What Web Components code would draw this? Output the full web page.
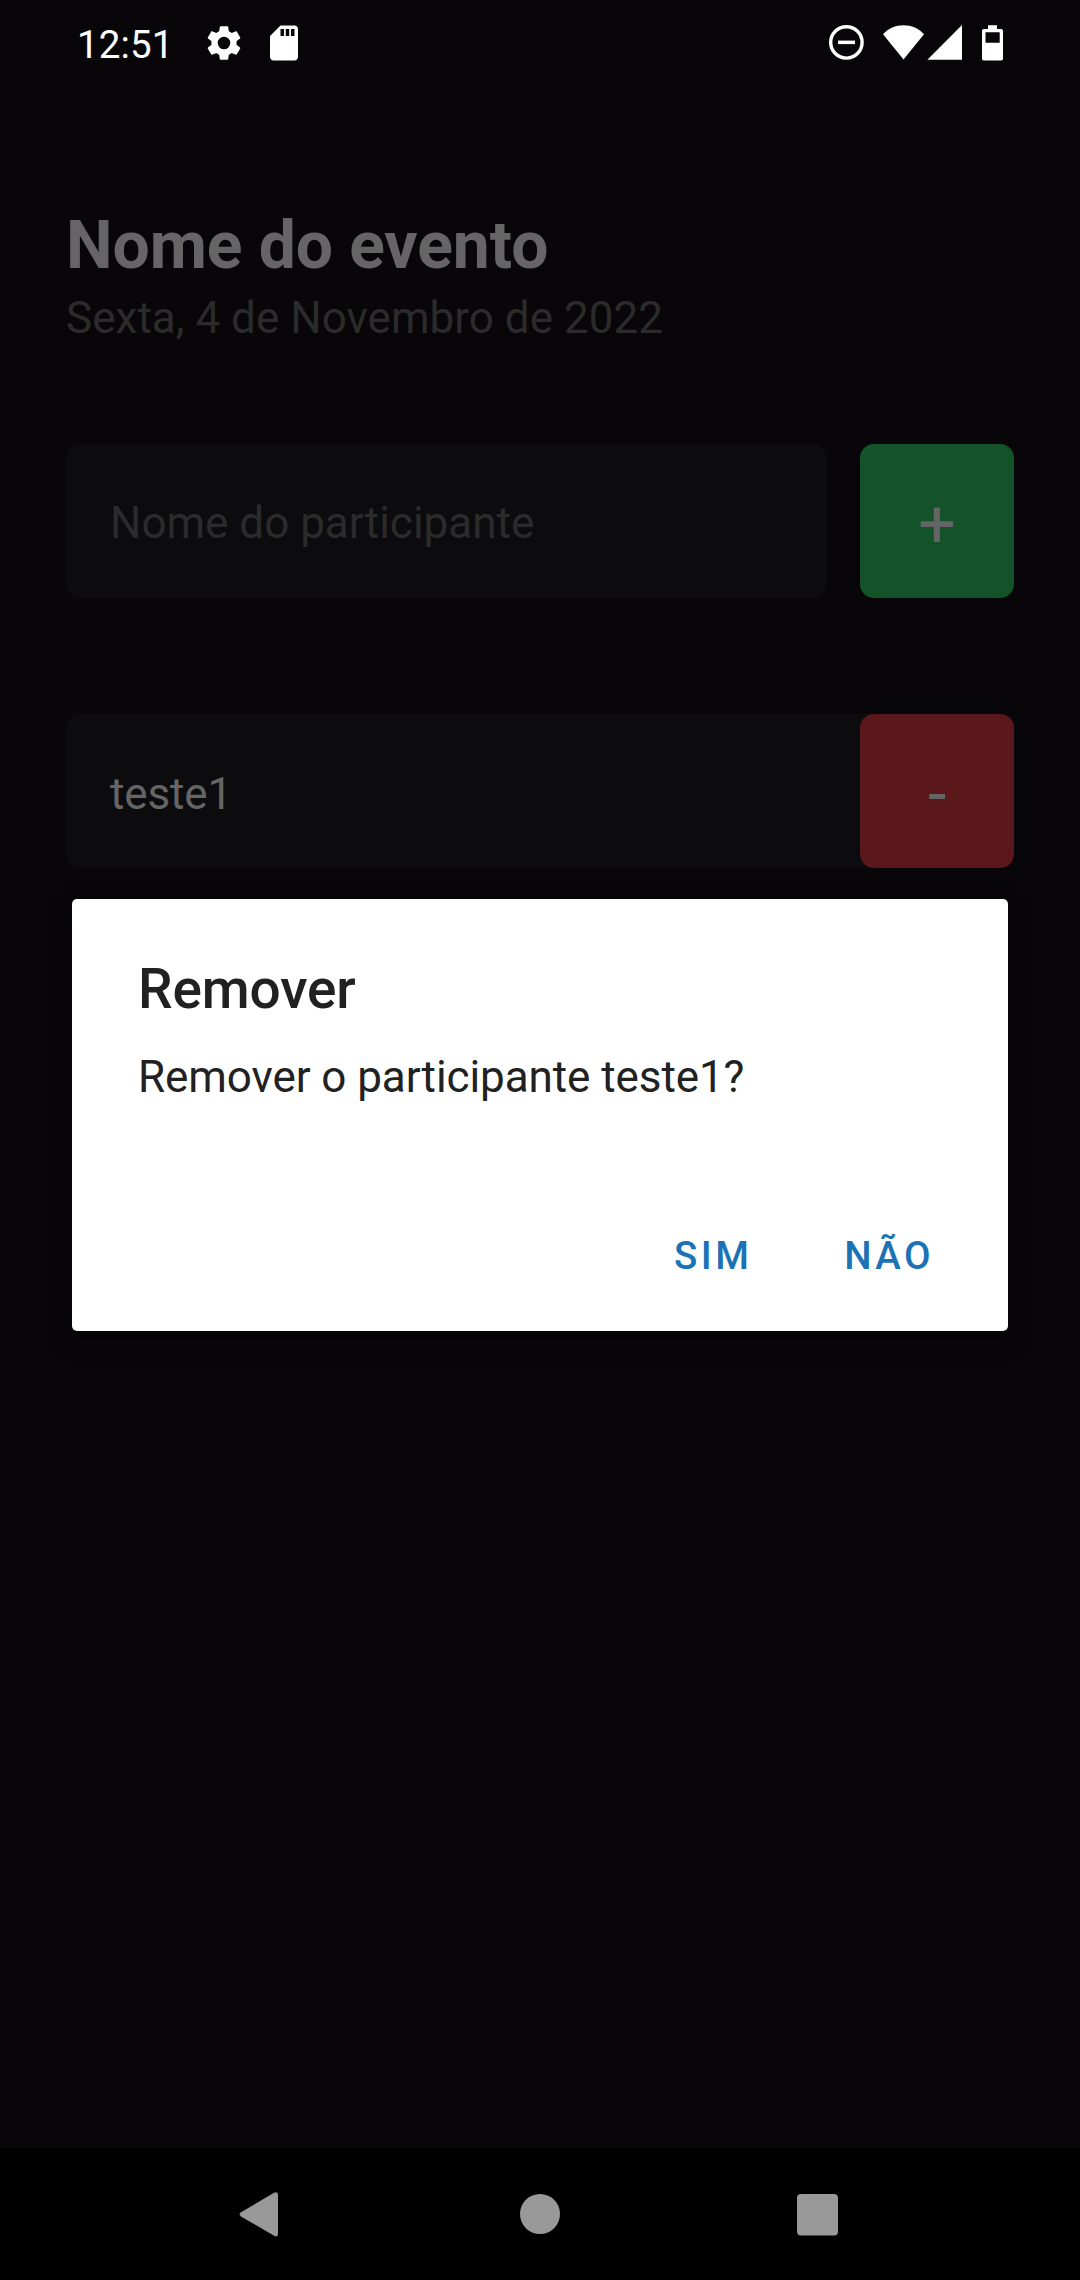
<!DOCTYPE html>
<html lang="pt-BR">
<head>
<meta charset="utf-8">
<title>Nome do evento</title>
<style>
html,body{margin:0;padding:0;background:#080609}
body{width:1080px;height:2280px;overflow:hidden;font-family:Roboto,"Noto Sans",sans-serif}
</style>
</head>
<body>
<event-app>
  <event-header slot="header" title-text="Nome do evento">Sexta, 4 de Novembro de 2022</event-header>
  <participant-form slot="form">Nome do participante</participant-form>
  <participant-row slot="list">teste1</participant-row>
  <confirm-dialog slot="dialog" heading="Remover">Remover o participante teste1?
    <dialog-action slot="actions">SIM</dialog-action>
    <dialog-action slot="actions">NÃO</dialog-action>
  </confirm-dialog>
</event-app>
<script>
const define = (name, html) => customElements.define(name, class extends HTMLElement {
  constructor() {
    super();
    const t = document.createElement('template');
    t.innerHTML = html;
    this.attachShadow({mode: 'open'}).appendChild(t.content.cloneNode(true));
  }
  connectedCallback() {
    this.shadowRoot.querySelectorAll('[data-attr]').forEach(e => {
      e.textContent = this.getAttribute(e.dataset.attr) || '';
    });
  }
});

define('status-bar', `
<style>
:host{display:flex;justify-content:space-between;align-items:flex-start;box-sizing:border-box;height:84px;padding:22px 73px 0 77px;color:#fff}
.side{display:flex;align-items:center;height:42px}
.time{font-size:38.5px;line-height:46px;padding-top:3px;width:125.500px;letter-spacing:.15px}
svg{display:block;fill:currentColor;flex:none}
</style>
<div class="side">
  <span class="time">12:51</span>
  <svg width="42" height="42" viewBox="0 0 24 24"><path d="M19.14 12.94c.04-.3.06-.61.06-.94 0-.32-.02-.64-.07-.94l2.03-1.58a.49.49 0 0 0 .12-.61l-1.92-3.32a.488.488 0 0 0-.59-.22l-2.39.96c-.5-.38-1.03-.7-1.62-.94l-.36-2.54a.484.484 0 0 0-.48-.41h-3.84c-.24 0-.43.17-.47.41l-.36 2.54c-.59.24-1.13.57-1.62.94l-2.39-.96c-.22-.08-.47 0-.59.22L2.74 8.87c-.12.21-.08.47.12.61l2.03 1.58c-.05.3-.09.63-.09.94s.02.64.07.94l-2.03 1.58a.49.49 0 0 0-.12.61l1.92 3.32c.12.22.37.29.59.22l2.39-.96c.5.38 1.03.7 1.62.94l.36 2.54c.05.24.24.41.48.41h3.84c.24 0 .44-.17.47-.41l.36-2.54c.59-.24 1.13-.56 1.62-.94l2.39.96c.22.08.47 0 .59-.22l1.92-3.32c.12-.22.07-.47-.12-.61l-2.01-1.58zM12 15.6A3.6 3.6 0 1 1 12 8.4a3.6 3.6 0 0 1 0 7.2z"/></svg>
  <svg style="margin-left:18.5px" width="42" height="42" viewBox="0 0 24 24"><path d="M18 2h-8L4.02 8 4 20c0 1.1.9 2 2 2h12c1.1 0 2-.9 2-2V4c0-1.100-.9-2-2-2zm-6 6h-2V4h2v4zm3 0h-2V4h2v4zm3 0h-2V4h2v4z"/></svg>
</div>
<div class="side">
  <svg width="182" height="42" viewBox="825 22 182 42">
    <circle cx="846.4" cy="42.4" r="15.7" fill="none" stroke="#fff" stroke-width="3.4"/>
    <path d="M838 40.600h17v3.500h-17z"/>
    <path d="M903.500 59.500 883 34.200C888.500 28.500 895.500 25.300 903.500 25.300S918.500 28.500 924 34.200Z"/>
    <path d="M962 25v34.700h-34.600z"/>
    <path fill-rule="evenodd" d="M988 25.300h9v3.700h4.200q1.800 0 1.800 1.800v27.900q0 1.800-1.800 1.800h-17.400q-1.800 0-1.800-1.800v-27.900q0-1.800 1.800-1.800h4.200zM985.500 32.300v10.400h14.200v-10.400z"/>
  </svg>
</div>`);

define('nav-bar', `
<style>
:host{display:flex;justify-content:space-between;align-items:center;box-sizing:border-box;height:132px;padding:0 240px 0 238px;background:#000}
svg{display:block;fill:#999}
</style>
<svg width="44" height="50" viewBox="0 0 44 50"><path d="M36.600 3.500 3 23.200q-2.600 2 0 4.200l33.600 19.700q3.400 1.200 3.400-2.400V5.900q0-3.600-3.400-2.400z"/></svg>
<svg width="44" height="50" viewBox="0 0 44 50"><circle cx="23" cy="25" r="20"/></svg>
<svg width="44" height="50" viewBox="0 0 44 50"><rect x="1" y="5" width="41" height="41.500" rx="4"/></svg>`);

define('event-header', `
<style>
:host{display:flex;flex-direction:column;gap:7px;color:#656566}
h1{margin:0;font-size:66px;line-height:79px;font-weight:700;letter-spacing:-.08px}
p{margin:0;font-size:44px;line-height:52px;color:#2b2b2b;letter-spacing:.03px}
</style>
<h1 data-attr="title-text"></h1><p><slot></slot></p>`);

define('square-button', `
<style>
:host{display:flex;align-items:center;justify-content:center;flex:none;box-sizing:border-box;width:154px;height:154px;padding-top:8px;border-radius:14px;background:var(--fill);color:#656566;font-size:66px;line-height:78px}
</style>
<slot></slot>`);

define('participant-form', `
<style>
:host{display:flex;gap:33px}
.field{flex:1;display:flex;align-items:center;box-sizing:border-box;height:154px;padding:3px 44px 0;border-radius:14px;background:#0c0c0e;color:#2b2b2b;font-size:44px;line-height:52px}
square-button{--fill:#145329}
</style>
<div class="field"><slot></slot></div><square-button>+</square-button>`);

define('participant-row', `
<style>
:host{display:flex;border-radius:14px;background:#0c0c0e}
.name{flex:1;display:flex;align-items:center;box-sizing:border-box;height:154px;padding:5px 44px 0;color:#656566;font-size:44px;line-height:52px;letter-spacing:-.15px}
square-button{--fill:#5a181b}
</style>
<div class="name"><slot></slot></div><square-button>-</square-button>`);

define('dialog-action', `
<style>
:host{display:block;font-size:38.5px;line-height:46px;font-weight:500;letter-spacing:3.44px;color:#1b72b5}
</style>
<slot></slot>`);

define('confirm-dialog', `
<style>
:host{position:absolute;inset:0;display:flex;align-items:flex-start;justify-content:center;padding-top:899px}
.card{display:flex;flex-direction:column;box-sizing:border-box;width:936px;height:432px;padding:58px 74px 52px 66px;border-radius:5px;background:#fff;color:#212121;box-shadow:0 8px 22px rgba(0,0,0,.4)}
h2{margin:0;font-size:55px;line-height:64px;font-weight:500;letter-spacing:-.15px}
p{margin:30px 0 0;font-size:44px;line-height:52px;letter-spacing:-.08px}
.actions{display:flex;justify-content:flex-end;gap:92px;margin-top:auto}
</style>
<div class="card">
  <h2 data-attr="heading"></h2>
  <p><slot></slot></p>
  <div class="actions"><slot name="actions"></slot></div>
</div>`);

define('event-app', `
<style>
:host{display:flex;flex-direction:column;position:relative;width:1080px;height:2280px;background:#080609}
main{flex:1;display:flex;flex-direction:column;padding:122px 66px 0}
.form{margin-top:100px}
.list{margin-top:116px}
</style>
<status-bar></status-bar>
<main>
  <slot name="header"></slot>
  <div class="form"><slot name="form"></slot></div>
  <div class="list"><slot name="list"></slot></div>
</main>
<nav-bar></nav-bar>
<slot name="dialog"></slot>`);
</script>
</body>
</html>
